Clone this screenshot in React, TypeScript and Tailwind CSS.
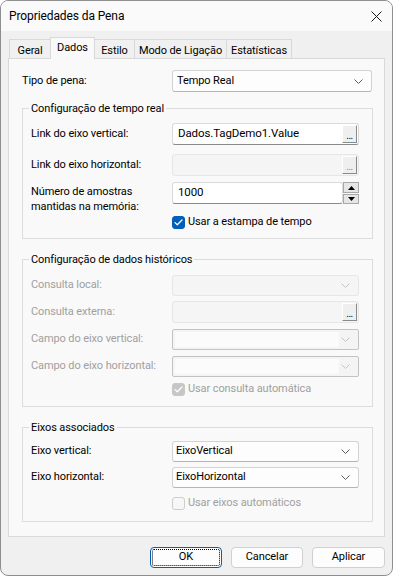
import React from 'react';

function Chevron({ disabled }: { disabled?: boolean }) {
  return (
    <svg width="9" height="5" viewBox="0 0 9 5" className="shrink-0">
      <path d="M0.5 0.5 L4.5 4.5 L8.5 0.5" fill="none" stroke={disabled ? '#c4c4c4' : '#5c5c5c'} strokeWidth="1" />
    </svg>
  );
}

function Check() {
  return (
    <svg width="9" height="7" viewBox="0 0 9 7">
      <path d="M1 3.6 L3.3 5.8 L8 1" fill="none" stroke="#fff" strokeWidth="1.3" strokeLinecap="round" strokeLinejoin="round" />
    </svg>
  );
}

function Checkbox({ label, state }: { label: string; state: 'on' | 'dis-on' | 'dis-off' }) {
  const box =
    state === 'on'
      ? 'bg-[#005fb8] border-[#005fb8]'
      : state === 'dis-on'
        ? 'bg-[#c6c6c6] border-[#c6c6c6]'
        : 'bg-[#f7f7f7] border-[#cdcdcd]';
  return (
    <div className="flex items-center h-[15px] pl-[141px]">
      <div className={`w-[13px] h-[13px] rounded-[3px] border flex items-center justify-center ${box}`}>
        {state !== 'dis-off' && <Check />}
      </div>
      <span className={`ml-[3px] ${state === 'on' ? 'text-black' : 'text-[#a0a0a0]'}`}>{label}</span>
    </div>
  );
}

function Browse({ disabled }: { disabled?: boolean }) {
  return (
    <div className="w-[15px] h-[18px] bg-[#efefef] border border-t-white border-l-white border-r-[#8a8a8a] border-b-[#8a8a8a] flex items-end justify-center shrink-0">
      <span className={`text-[10px] leading-[12px] tracking-[-0.5px] ${disabled ? 'text-[#8a8a8a]' : 'text-black'}`}>...</span>
    </div>
  );
}

function Row({ label, disabled, children, className = '' }: { label: string; disabled?: boolean; children: React.ReactNode; className?: string }) {
  return (
    <div className={`flex items-center ${className}`}>
      <span className={`w-[141px] shrink-0 ${disabled ? 'text-[#a0a0a0]' : 'text-black'}`}>{label}</span>
      {children}
    </div>
  );
}

function Group({ title, children, className = '' }: { title: string; children: React.ReactNode; className?: string }) {
  return (
    <fieldset className={`ml-[13px] w-[351px] border border-[#dcdcdc] pl-[8px] pr-[12px] ${className}`}>
      <legend className="-ml-[2px] px-[2px] leading-[15px] text-black">{title}</legend>
      {children}
    </fieldset>
  );
}

const tabs = [
  { name: 'Geral', w: 'w-[42px]' },
  { name: 'Dados', w: 'w-[45px]' },
  { name: 'Estilo', w: 'w-[41px]' },
  { name: 'Modo de Ligação', w: 'w-[93px]' },
  { name: 'Estatísticas', w: 'w-[66px]' },
];

export default function App() {
  return (
    <div className="w-[393px] h-[576px] bg-white font-['Roboto','Liberation_Sans',sans-serif] text-[11px] tracking-[-0.1px] text-black">
      <div className="w-full h-full border border-[#8e8e8e] rounded-[8px] bg-[#f0f0f0] overflow-hidden flex flex-col">
        {/* title bar */}
        <div className="h-[30px] bg-[#fafafa] flex items-center pl-[8px] pr-[9px] shrink-0">
          <span className="text-[12px] tracking-[-0.1px]">Propriedades da Pena</span>
          <svg width="11" height="11" viewBox="0 0 11 11" className="ml-auto mr-[1px]">
            <path d="M0.5 0.5 L10.5 10.5 M10.5 0.5 L0.5 10.5" stroke="#1a1a1a" strokeWidth="1" />
          </svg>
        </div>

        {/* tabs */}
        <div className="flex items-end mt-[6px] ml-[8px] relative z-10">
          {tabs.map((t, i) =>
            t.name === 'Dados' ? (
              <div
                key={t.name}
                className={`${t.w} -ml-px h-[22px] -mb-px bg-[#f9f9f9] border border-b-0 border-[#d9d9d9] flex justify-center pt-[2px] leading-[15px] relative z-10`}
              >
                {t.name}
              </div>
            ) : (
              <div
                key={t.name}
                className={`${t.w} ${i > 0 ? '-ml-px' : ''} h-[19px] bg-[#f0f0f0] border border-b-0 border-[#d9d9d9] flex justify-center pt-[3px] leading-[15px]`}
              >
                {t.name}
              </div>
            ),
          )}
        </div>

        {/* panel */}
        <div className="ml-[7px] w-[377px] h-[479px] bg-[#f9f9f9] border border-[#d9d9d9] flex flex-col">
          <div className="flex items-center mt-[11px] pl-[13px]">
            <span className="w-[150px] shrink-0">Tipo de pena:</span>
            <div className="w-[200px] h-[22px] rounded-[3px] border border-[#d3d3d3] border-b-[#b4b4b4] bg-[#fdfdfd] flex items-center pl-[4px] pr-[8px]">
              <span>Tempo Real</span>
              <span className="ml-auto">
                <Chevron />
              </span>
            </div>
          </div>

          <Group title="Configuração de tempo real" className="mt-[9px] pb-[8px]">
            <Row label="Link do eixo vertical:" className="mt-[7px]">
              <div className="w-[187px] h-[22px] rounded-[3px] border border-[#dadada] border-b-[#8a8a8a] bg-white flex items-center pl-[5px] pr-[1px]">
                <span className="text-[11.5px]">Dados.TagDemo1.Value</span>
                <span className="ml-auto">
                  <Browse />
                </span>
              </div>
            </Row>
            <Row label="Link do eixo horizontal:" className="mt-[9px]">
              <div className="w-[187px] h-[22px] rounded-[3px] border border-[#e6e6e6] bg-[#f5f5f5] flex items-center pr-[1px]">
                <span className="ml-auto">
                  <Browse disabled />
                </span>
              </div>
            </Row>
            <div className="flex items-start mt-[6px]">
              <span className="w-[141px] shrink-0 mt-[2px] leading-[15px]">
                Número de amostras
                <br />
                mantidas na memória:
              </span>
              <div className="w-[171px] h-[22px] rounded-[3px] border border-[#dadada] border-b-[#8a8a8a] bg-white flex items-center pl-[5px]">
                <span className="text-[11.5px]">1000</span>
              </div>
              <div className="w-[16px] h-[22px] flex flex-col gap-px">
                <div className="h-[11px] bg-[#e6e6e6] border border-[#a8a8a8] flex items-center justify-center">
                  <svg width="7" height="4" viewBox="0 0 7 4">
                    <path d="M0 4 L3.5 0 L7 4 Z" fill="#000" />
                  </svg>
                </div>
                <div className="h-[10px] bg-[#e6e6e6] border border-[#a8a8a8] flex items-center justify-center">
                  <svg width="7" height="4" viewBox="0 0 7 4">
                    <path d="M0 0 L3.5 4 L7 0 Z" fill="#000" />
                  </svg>
                </div>
              </div>
            </div>
            <div className="mt-[1px]">
              <Checkbox label="Usar a estampa de tempo" state="on" />
            </div>
          </Group>

          <Group title="Configuração de dados históricos" className="mt-[13px] pb-[9px]">
            <Row label="Consulta local:" disabled className="mt-[8px]">
              <div className="w-[187px] h-[21px] rounded-[3px] border border-[#e6e6e6] bg-[#f5f5f5] flex items-center pr-[8px]">
                <span className="ml-auto">
                  <Chevron disabled />
                </span>
              </div>
            </Row>
            <Row label="Consulta externa:" disabled className="mt-[5px]">
              <div className="w-[187px] h-[22px] rounded-[3px] border border-[#e6e6e6] bg-[#f5f5f5] flex items-center pr-[1px]">
                <span className="ml-auto">
                  <Browse />
                </span>
              </div>
            </Row>
            <Row label="Campo do eixo vertical:" disabled className="mt-[6px]">
              <div className="w-[187px] h-[21px] rounded-[2px] border border-[#c3c3c3] bg-[#f4f4f4] flex items-center p-[2px] pr-[8px]">
                <div className="w-[164px] h-full bg-[#fbfbfb]" />
                <span className="ml-auto">
                  <Chevron disabled />
                </span>
              </div>
            </Row>
            <Row label="Campo do eixo horizontal:" disabled className="mt-[6px]">
              <div className="w-[187px] h-[21px] rounded-[2px] border border-[#c3c3c3] bg-[#f4f4f4] flex items-center p-[2px] pr-[8px]">
                <div className="w-[164px] h-full bg-[#fbfbfb]" />
                <span className="ml-auto">
                  <Chevron disabled />
                </span>
              </div>
            </Row>
            <div className="mt-[5px]">
              <Checkbox label="Usar consulta automática" state="dis-on" />
            </div>
          </Group>

          <Group title="Eixos associados" className="mt-[13px] pb-[10px]">
            <Row label="Eixo vertical:" className="mt-[6px]">
              <div className="w-[187px] h-[21px] rounded-[3px] border border-[#d3d3d3] border-b-[#b4b4b4] bg-[#fdfdfd] flex items-center pl-[3px] pr-[8px]">
                <span>EixoVertical</span>
                <span className="ml-auto">
                  <Chevron />
                </span>
              </div>
            </Row>
            <Row label="Eixo horizontal:" className="mt-[5px]">
              <div className="w-[187px] h-[21px] rounded-[3px] border border-[#d3d3d3] border-b-[#b4b4b4] bg-[#fdfdfd] flex items-center pl-[3px] pr-[8px]">
                <span>EixoHorizontal</span>
                <span className="ml-auto">
                  <Chevron />
                </span>
              </div>
            </Row>
            <div className="mt-[8px]">
              <Checkbox label="Usar eixos automáticos" state="dis-off" />
            </div>
          </Group>
        </div>

        {/* buttons */}
        <div className="flex justify-end gap-[9px] mt-[10px] pr-[7px]">
          <button className="w-[72px] h-[21px] rounded-[4px] border border-[#005fb8] bg-[#fdfdfd] outline outline-1 outline-dotted outline-black outline-offset-[-3px]">
            OK
          </button>
          <button className="w-[72px] h-[21px] rounded-[4px] border border-[#d0d0d0] bg-[#fdfdfd]">Cancelar</button>
          <button className="w-[73px] h-[21px] rounded-[4px] border border-[#d0d0d0] bg-[#fdfdfd]">Aplicar</button>
        </div>
      </div>
    </div>
  );
}
